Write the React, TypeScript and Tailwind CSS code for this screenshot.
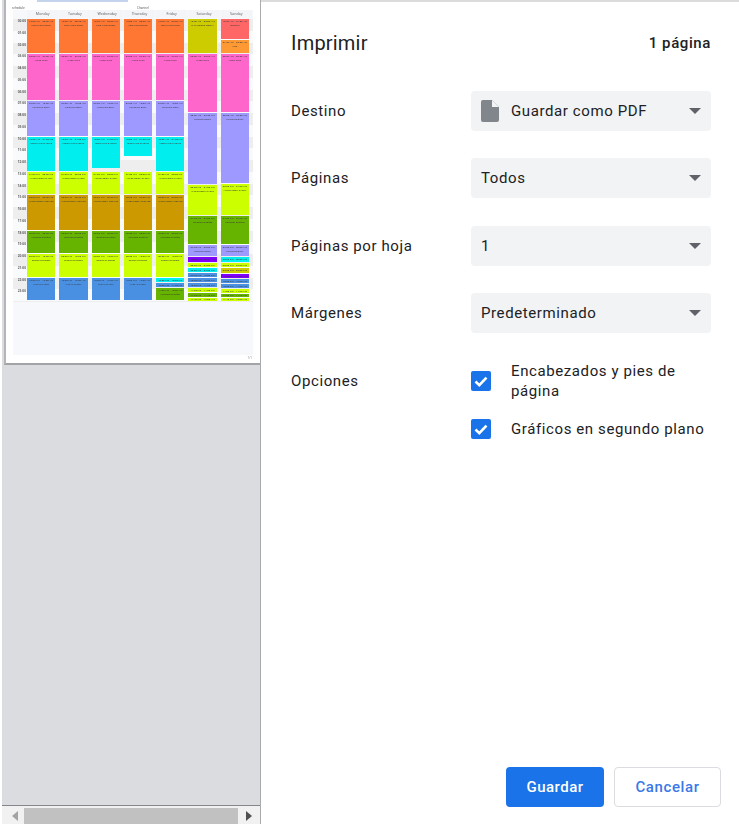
const ORANGE = 'bg-[#ff7733]';
const PINK = 'bg-[#ff66cc]';
const PERI = 'bg-[#9e99ff]';
const CYAN = 'bg-[#00eeee]';
const LIME = 'bg-[#ccff00]';
const GOLD = 'bg-[#cc9900]';
const GREEN = 'bg-[#66b300]';
const BLUE = 'bg-[#4a90e2]';
const OLIVE = 'bg-[#cccc00]';
const RED = 'bg-[#ff6666]';
const AMBER = 'bg-[#ff9933]';
const PURPLE = 'bg-[#7f00ff]';

type Block = { h: number; color: string; time: string; name?: string };

const weekday = (cyanH: number, fill: number): Block[] => {
  const blocks: Block[] = [
    { h: 34, color: ORANGE, time: '12:00 AM – 03:00 AM', name: 'Late Night Show' },
    { h: 46, color: PINK, time: '03:00 AM – 07:00 AM', name: 'Video Clips' },
    { h: 35, color: PERI, time: '07:00 AM – 10:00 AM', name: 'Lauching Baby' },
    { h: cyanH, color: CYAN, time: '10:00 AM – 01:00 PM', name: 'MORNING SHOWS' },
  ];
  if (fill > 0) blocks.push({ h: fill, color: 'bg-transparent', time: '' });
  return [
    ...blocks,
    { h: 22, color: LIME, time: '01:00 PM – 03:00 PM', name: 'AFTERNOON SHOW' },
    { h: 35, color: GOLD, time: '03:00 PM – 06:00 PM', name: 'AFTERNOON MOVIES' },
    { h: 22, color: GREEN, time: '06:00 PM – 08:00 PM', name: 'Intimate Dueñas' },
    { h: 23, color: LIME, time: '08:00 PM – 10:00 PM', name: 'Sketch of Sweet' },
  ];
};

const nightShow: Block = { h: 22, color: BLUE, time: '10:00 PM – 12:00 AM', name: 'NIGHT SHOW' };

const friday: Block[] = [
  ...weekday(34, 0),
  { h: 4, color: CYAN, time: '10:00 PM – 10:30 PM' },
  { h: 4, color: BLUE, time: '10:30 PM – 11:00 PM' },
  { h: 12, color: GREEN, time: '11:00 PM – 12:00 AM', name: 'Intimate Dueñas' },
];

const saturday: Block[] = [
  { h: 34, color: OLIVE, time: '12:00 AM – 03:00 AM', name: 'THE WORLD TODAY' },
  { h: 58, color: PINK, time: '03:00 AM – 08:00 AM', name: 'Video Clips' },
  { h: 71, color: PERI, time: '08:00 AM – 02:00 PM', name: 'Lauching Baby' },
  { h: 30, color: LIME, time: '02:00 PM – 04:30 PM', name: 'AFTERNOON SHOW' },
  { h: 28, color: GREEN, time: '04:30 PM – 07:00 PM', name: 'Intimate Dueñas' },
  { h: 11, color: PERI, time: '07:00 PM – 08:00 PM', name: 'Lauching Baby' },
  { h: 5, color: PURPLE, time: '08:00 PM – 08:30 PM' },
  { h: 4, color: LIME, time: '08:30 PM – 09:00 PM' },
  { h: 4, color: CYAN, time: '09:00 PM – 09:30 PM' },
  { h: 4, color: BLUE, time: '09:30 PM – 10:00 PM' },
  { h: 4, color: BLUE, time: '10:00 PM – 10:30 PM' },
  { h: 4, color: BLUE, time: '10:30 PM – 11:00 PM' },
  { h: 4, color: LIME, time: '11:00 PM – 11:20 PM' },
  { h: 4, color: GREEN, time: '11:20 PM – 11:40 PM' },
  { h: 3, color: LIME, time: '11:40 PM – 12:00 AM' },
];

const sunday: Block[] = [
  { h: 20, color: RED, time: '12:00 AM – 01:30 AM', name: 'Mosque' },
  { h: 13, color: AMBER, time: '01:30 AM – 03:00 AM', name: 'Info' },
  { h: 58, color: PINK, time: '03:00 AM – 08:00 AM', name: 'Video Clips' },
  { h: 70, color: PERI, time: '08:00 AM – 02:00 PM', name: 'Lauching Baby' },
  { h: 31, color: LIME, time: '02:00 PM – 04:30 PM', name: 'AFTERNOON SHOW' },
  { h: 28, color: GREEN, time: '04:30 PM – 07:00 PM', name: 'Intimate Dueñas' },
  { h: 11, color: PERI, time: '07:00 PM – 08:00 PM', name: 'Lauching Baby' },
  { h: 5, color: CYAN, time: '08:00 PM – 08:30 PM' },
  { h: 4, color: LIME, time: '08:30 PM – 09:00 PM' },
  { h: 5, color: OLIVE, time: '09:00 PM – 09:30 PM' },
  { h: 4, color: PURPLE, time: '09:30 PM – 10:00 PM' },
  { h: 4, color: BLUE, time: '10:00 PM – 10:30 PM' },
  { h: 4, color: BLUE, time: '10:30 PM – 11:00 PM' },
  { h: 4, color: LIME, time: '11:00 PM – 11:20 PM' },
  { h: 3, color: GREEN, time: '11:20 PM – 11:40 PM' },
  { h: 3, color: LIME, time: '11:40 PM – 12:00 AM' },
];

const days: { name: string; blocks: Block[] }[] = [
  { name: 'Monday', blocks: [...weekday(34, 0), nightShow] },
  { name: 'Tuesday', blocks: [...weekday(34, 0), nightShow] },
  { name: 'Wednesday', blocks: [...weekday(31, 2), nightShow] },
  { name: 'Thursday', blocks: [...weekday(19, 14), nightShow] },
  { name: 'Friday', blocks: friday },
  { name: 'Saturday', blocks: saturday },
  { name: 'Sunday', blocks: sunday },
];

const hours = Array.from({ length: 24 }, (_, i) => `${String(i).padStart(2, '0')}:00`);

function Timetable() {
  return (
    <div className="flex h-[345px] flex-col bg-[#f7f8fb] text-[#333333] blur-[0.45px]">
      <div className="flex h-[9px] shrink-0">
        <div className="w-[14px] shrink-0" />
        {days.map((d) => (
          <div key={d.name} className="flex-1 pr-[1px] text-center text-[3.6px] leading-[8px] text-[#666666]">
            <div className="bg-[#f3f5f8]">{d.name}</div>
          </div>
        ))}
      </div>
      <div className="flex h-[283px] shrink-0 bg-[repeating-linear-gradient(#eeeeee_0,#eeeeee_11.75px,#f9fafc_11.75px,#f9fafc_23.5px)]">
        <div className="flex w-[14px] shrink-0 flex-col">
          {hours.map((h) => (
            <div key={h} className="h-[11.75px] pr-[1px] text-right text-[3.2px] leading-[4px] font-bold text-[#666666]">
              {h}
            </div>
          ))}
        </div>
        {days.map((d) => (
          <div key={d.name} className="flex flex-1 flex-col gap-[1px] pr-[4px]">
            {d.blocks.map((b, i) => (
              <div
                key={i}
                className={`text-center text-[2.5px] text-[#3b3b3b] ${b.color}`}
                style={{ height: b.h, lineHeight: `${Math.min(b.h, 4)}px` }}
              >
                <div>{b.time}</div>
                {b.name && <div className="whitespace-nowrap">{b.name}</div>}
              </div>
            ))}
          </div>
        ))}
      </div>
    </div>
  );
}

function PreviewPane() {
  return (
    <div className="relative flex h-full w-[261px] shrink-0 flex-col border-r border-r-[#a9abae] pl-[2px]">
      <div className="min-h-0 flex-1 border-b border-b-[#84868a] bg-[#dadce0]">
        <div className="ml-[2px] h-[365px] w-[256px] border-b-2 border-l-2 border-b-[#a2a4a8] border-l-[#b3b5b8] bg-white pt-[10px] pl-[7px]">
          <div className="relative w-[240px]">
            <span className="absolute top-[-3px] left-[-1px] text-[3px] leading-none text-[#555555] blur-[0.3px]">schedule</span>
            <span className="absolute top-[-3px] left-[124px] text-[3px] leading-none text-[#555555] blur-[0.3px]">Channel</span>
            <Timetable />
            <span className="absolute right-[1px] bottom-[-5px] text-[3px] leading-none text-[#888888] blur-[0.3px]">1/1</span>
          </div>
        </div>
      </div>
      <div className="flex h-[18px] shrink-0 items-end bg-[#f1f1f1]">
        <div className="flex h-[16px] w-[22px] items-center justify-center">
          <svg width="6" height="10" viewBox="0 0 6 10" className="ml-[4px]">
            <path d="M6 0v10L0 5z" fill="#a3a3a3" />
          </svg>
        </div>
        <div className="h-[16px] w-[214px] bg-[#c1c1c1]" />
        <div className="flex h-[16px] w-[22px] items-center justify-center">
          <svg width="6" height="10" viewBox="0 0 6 10">
            <path d="M0 0v10l6-5z" fill="#505050" />
          </svg>
        </div>
      </div>
      <div className="absolute top-0 left-[37px] h-[2px] w-[91px] bg-[#c3d4ec]" />
    </div>
  );
}

function Caret() {
  return (
    <svg width="12" height="6" viewBox="0 0 12 6" className="shrink-0">
      <path d="M0 0h12L6 6z" fill="#5f6368" />
    </svg>
  );
}

function SelectRow({ label, value, icon, className }: { label: string; value: string; icon?: boolean; className?: string }) {
  return (
    <div className={`flex items-center ${className ?? ''}`}>
      <div className="w-[180px] shrink-0 text-[15px] tracking-[0.6px] text-[#202124]">{label}</div>
      <div className="flex h-10 w-[240px] items-center rounded-[4px] bg-[#f1f3f4] pr-[10px] pl-[10px]">
        {icon && (
          <svg width="18" height="22" viewBox="0 0 18 22" className="mr-[12px] shrink-0">
            <path d="M2 0h9l7 7v13a2 2 0 0 1-2 2H2a2 2 0 0 1-2-2V2a2 2 0 0 1 2-2z" fill="#80868b" />
            <path d="M11 0l7 7h-7z" fill="#f1f3f4" />
          </svg>
        )}
        <span className="flex-1 text-[15px] tracking-[0.6px] text-[#202124]">{value}</span>
        <Caret />
      </div>
    </div>
  );
}

function Check() {
  return (
    <div className="flex h-5 w-5 shrink-0 items-center justify-center rounded-[2px] bg-[#1a73e8]">
      <svg width="14" height="11" viewBox="0 0 14 11">
        <path d="M1.5 5.5l3.8 3.6L12.5 1.6" fill="none" stroke="#ffffff" strokeWidth="2.6" />
      </svg>
    </div>
  );
}

function SettingsPane() {
  return (
    <div className="flex h-full flex-1 flex-col border-t-2 border-t-[#dcdcdc] pl-[30px] font-['Roboto',sans-serif]">
      <div className="flex h-[80px] shrink-0 items-center pt-[1px] pr-[28px]">
        <h1 className="flex-1 text-[20px] leading-none font-normal tracking-[0.2px] text-[#202124]">Imprimir</h1>
        <div className="pt-[1px] text-[15px] font-medium tracking-[0.6px] text-[#202124]">1 página</div>
      </div>
      <SelectRow label="Destino" value="Guardar como PDF" icon className="mt-[9px]" />
      <SelectRow label="Páginas" value="Todos" className="mt-[27px]" />
      <SelectRow label="Páginas por hoja" value="1" className="mt-[28px]" />
      <SelectRow label="Márgenes" value="Predeterminado" className="mt-[27px]" />
      <div className="mt-[28px] flex">
        <div className="w-[180px] shrink-0 pt-[9px] text-[15px] tracking-[0.6px] text-[#202124]">Opciones</div>
        <div className="flex w-[240px] flex-col gap-[18px]">
          <div className="flex items-center gap-[20px]">
            <Check />
            <span className="text-[15px] leading-[20px] tracking-[0.6px] text-[#202124]">Encabezados y pies de página</span>
          </div>
          <div className="flex items-center gap-[20px]">
            <Check />
            <span className="text-[15px] leading-[20px] tracking-[0.6px] whitespace-nowrap text-[#202124]">Gráficos en segundo plano</span>
          </div>
        </div>
      </div>
      <div className="mt-auto mb-[17px] flex justify-end gap-[10px] pr-[18px]">
        <button className="h-10 w-[98px] rounded-[4px] bg-[#1a73e8] text-[15px] font-medium tracking-[0.5px] text-white">Guardar</button>
        <button className="h-10 w-[107px] rounded-[4px] border border-[#dadce0] bg-white text-[15px] font-medium tracking-[0.6px] text-[#3b78e7]">Cancelar</button>
      </div>
    </div>
  );
}

export default function App() {
  return (
    <div className="flex h-[824px] w-[739px] overflow-hidden bg-white">
      <PreviewPane />
      <SettingsPane />
    </div>
  );
}
